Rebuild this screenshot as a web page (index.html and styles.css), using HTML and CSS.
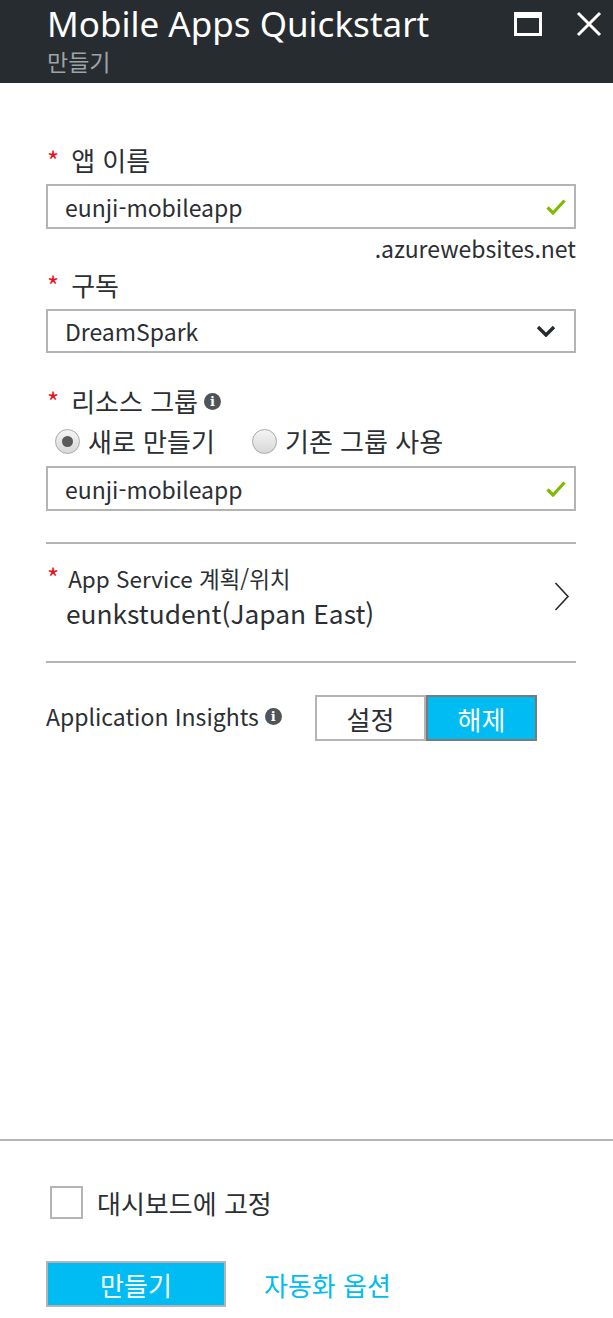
FILE: index.html
```html
<!DOCTYPE html>
<html lang="ko">
<head>
    <meta charset="UTF-8">
    <meta name="viewport" content="width=device-width, initial-scale=1.0">
    <title>Mobile Apps Quickstart</title>
    <link rel="stylesheet" href="styles.css">
</head>
<body>
<div class="blade">

    <header class="blade-header">
        <div class="titles">
            <h1>Mobile Apps Quickstart</h1>
            <p class="subtitle">만들기</p>
        </div>
        <div class="header-actions">
            <svg class="icon-max" width="28" height="24" viewBox="0 0 28 24">
                <path d="M0 0H28V24H0Z M3 6V21H25V6Z" fill="#fff" fill-rule="evenodd"/>
            </svg>
            <svg class="icon-close" width="26" height="26" viewBox="0 0 26 26">
                <path d="M2 2L24 24M24 2L2 24" stroke="#fff" stroke-width="3"/>
            </svg>
        </div>
    </header>

    <main class="blade-content">
        <!-- 앱 이름 -->
        <label class="field-label"><span class="req">*</span>앱 이름</label>
        <div class="input-box">
            <span>eunji-mobileapp</span>
            <svg class="check" width="20" height="20" viewBox="0 0 20 20">
                <path d="M1.5 10.5L7 16L18.5 3.5" stroke="#7fba00" stroke-width="3.2" fill="none"/>
            </svg>
        </div>
        <div class="suffix">.azurewebsites.net</div>

        <!-- 구독 -->
        <label class="field-label"><span class="req">*</span>구독</label>
        <div class="input-box select">
            <span>DreamSpark</span>
            <svg class="chevron-down" width="20" height="12" viewBox="0 0 20 12">
                <path d="M2 2L10 10L18 2" stroke="#252a2f" stroke-width="3.4" fill="none"/>
            </svg>
        </div>

        <!-- 리소스 그룹 -->
        <label class="field-label group-label"><span class="req">*</span>리소스 그룹<span class="info">i</span></label>
        <div class="radios">
            <label class="radio"><span class="dot checked"></span>새로 만들기</label>
            <label class="radio"><span class="dot"></span>기존 그룹 사용</label>
        </div>
        <div class="input-box">
            <span>eunji-mobileapp</span>
            <svg class="check" width="20" height="20" viewBox="0 0 20 20">
                <path d="M1.5 10.5L7 16L18.5 3.5" stroke="#7fba00" stroke-width="3.2" fill="none"/>
            </svg>
        </div>

        <!-- App Service 계획 -->
        <div class="picker">
            <div>
                <div class="picker-label"><span class="req">*</span>App Service 계획/위치</div>
                <div class="picker-value">eunkstudent(Japan East)</div>
            </div>
            <svg width="16" height="30" viewBox="0 0 16 30">
                <path d="M1.5 1L14 14.5L1.5 28" stroke="#252a2f" stroke-width="1.6" fill="none"/>
            </svg>
        </div>

        <div class="insights">
            <span class="insights-label">Application Insights<span class="info">i</span></span>
            <div class="toggle">
                <span class="opt">설정</span>
                <span class="opt on">해제</span>
            </div>
        </div>
    </main>

    <footer class="blade-footer">
        <label class="pin"><span class="box"></span>대시보드에 고정</label>
        <div class="actions">
            <button class="create">만들기</button>
            <a class="automation" href="#">자동화 옵션</a>
        </div>
    </footer>

</div>
</body>
</html>
```

FILE: styles.css
```css
body {
    margin: 0;
    font-family: "Noto Sans CJK KR", "Noto Sans", sans-serif;
    color: #2b2f33;
    background-color: #fff;
}

.blade {
    display: flex;
    flex-direction: column;
    height: 1318px;
}

.blade-header {
    background-color: #272c31;
    height: 83px;
    display: flex;
    justify-content: space-between;
    padding: 0 11px 0 47px;
    box-sizing: border-box;
}

.blade-header h1 {
    margin: 0;
    padding-top: 1px;
    font-family: "Noto Sans", "Noto Sans CJK KR", sans-serif;
    font-weight: normal;
    font-size: 35px;
    color: #fff;
    line-height: 45px;
}

.subtitle {
    margin: 0;
    font-size: 23px;
    color: #9ea2a6;
    line-height: 30px;
}

.header-actions {
    display: flex;
    align-items: flex-start;
    gap: 34px;
    padding-top: 11px;
}

.icon-max {
    margin-top: 1px;
}

.blade-content {
    flex: 1;
    display: flex;
    flex-direction: column;
    padding: 60px 37px 0 46px;
}

.field-label {
    display: flex;
    align-items: center;
    font-size: 26px;
    line-height: 34px;
    margin-bottom: 7px;
}

.group-label {
    margin-top: 31px;
    margin-bottom: 8px;
}

.req {
    color: #e81123;
    font-size: 26px;
    margin: 0 12px 0 1px;
}

.info {
    display: inline-block;
    width: 17px;
    height: 17px;
    border-radius: 50%;
    background-color: #4f5458;
    color: #fff;
    font-size: 13px;
    font-weight: bold;
    line-height: 17px;
    text-align: center;
    font-family: "DejaVu Serif", serif;
    margin-left: 6px;
}

.input-box {
    display: flex;
    justify-content: space-between;
    align-items: center;
    height: 45px;
    box-sizing: border-box;
    border: 2px solid #b4b4b4;
    padding: 0 8px 0 17px;
    font-size: 23px;
}

.select {
    height: 44px;
}

.suffix {
    text-align: right;
    font-size: 23px;
    line-height: 30px;
    margin: 4px 0 5px;
}

.chevron-down {
    margin-right: 10px;
}

.radios {
    display: flex;
    padding-left: 9px;
    margin-bottom: 10px;
}

.radio {
    display: flex;
    align-items: center;
    font-size: 26px;
    line-height: 30px;
    width: 197px;
}

.dot {
    width: 23px;
    height: 23px;
    border-radius: 50%;
    border: 1px solid #a9a9a9;
    background: linear-gradient(#f4f4f4, #d8d8d8);
    margin-right: 8px;
    position: relative;
}

.dot.checked::after {
    content: '';
    position: absolute;
    width: 11px;
    height: 11px;
    border-radius: 50%;
    background-color: #5a5a5a;
    top: 6px;
    left: 6px;
}

.picker {
    display: flex;
    justify-content: space-between;
    align-items: center;
    border-top: 2px solid #b4b4b4;
    border-bottom: 2px solid #b4b4b4;
    margin-top: 31px;
    height: 121px;
    box-sizing: border-box;
    padding: 0 6px 12px 0;
}

.picker-label {
    font-size: 22.5px;
    line-height: 28px;
}

.picker-label .req {
    margin-right: 9px;
}

.picker-value {
    font-size: 26.3px;
    line-height: 34px;
    margin-top: 4px;
    padding-left: 20px;
}

.insights {
    display: flex;
    align-items: center;
    margin-top: 32px;
}

.insights-label {
    font-size: 23px;
    display: flex;
    align-items: center;
    width: 269px;
    margin-top: -4px;
}

.toggle {
    display: flex;
    height: 46px;
}

.opt {
    width: 111px;
    box-sizing: border-box;
    border: 2px solid #b4b4b4;
    display: flex;
    align-items: center;
    justify-content: center;
    font-size: 26px;
}

.opt.on {
    background-color: #00bcf2;
    border-color: #7a7a7a;
    color: #fff;
}

.blade-footer {
    border-top: 2px solid #b4b4b4;
    height: 179px;
    box-sizing: border-box;
    padding: 43px 0 0 46px;
}

.pin {
    display: flex;
    align-items: center;
    font-size: 26px;
    margin-left: 4px;
}

.box {
    width: 33px;
    height: 33px;
    box-sizing: border-box;
    border: 2px solid #b4b4b4;
    margin-right: 14px;
}

.actions {
    display: flex;
    align-items: center;
    margin-top: 40px;
    gap: 38px;
}

.create {
    width: 180px;
    height: 46px;
    border: 2px solid #b4b4b4;
    background-color: #00bcf2;
    color: #fff;
    font-family: inherit;
    font-size: 26px;
}

.automation {
    color: #00bcf2;
    text-decoration: none;
    font-size: 26px;
}
```
